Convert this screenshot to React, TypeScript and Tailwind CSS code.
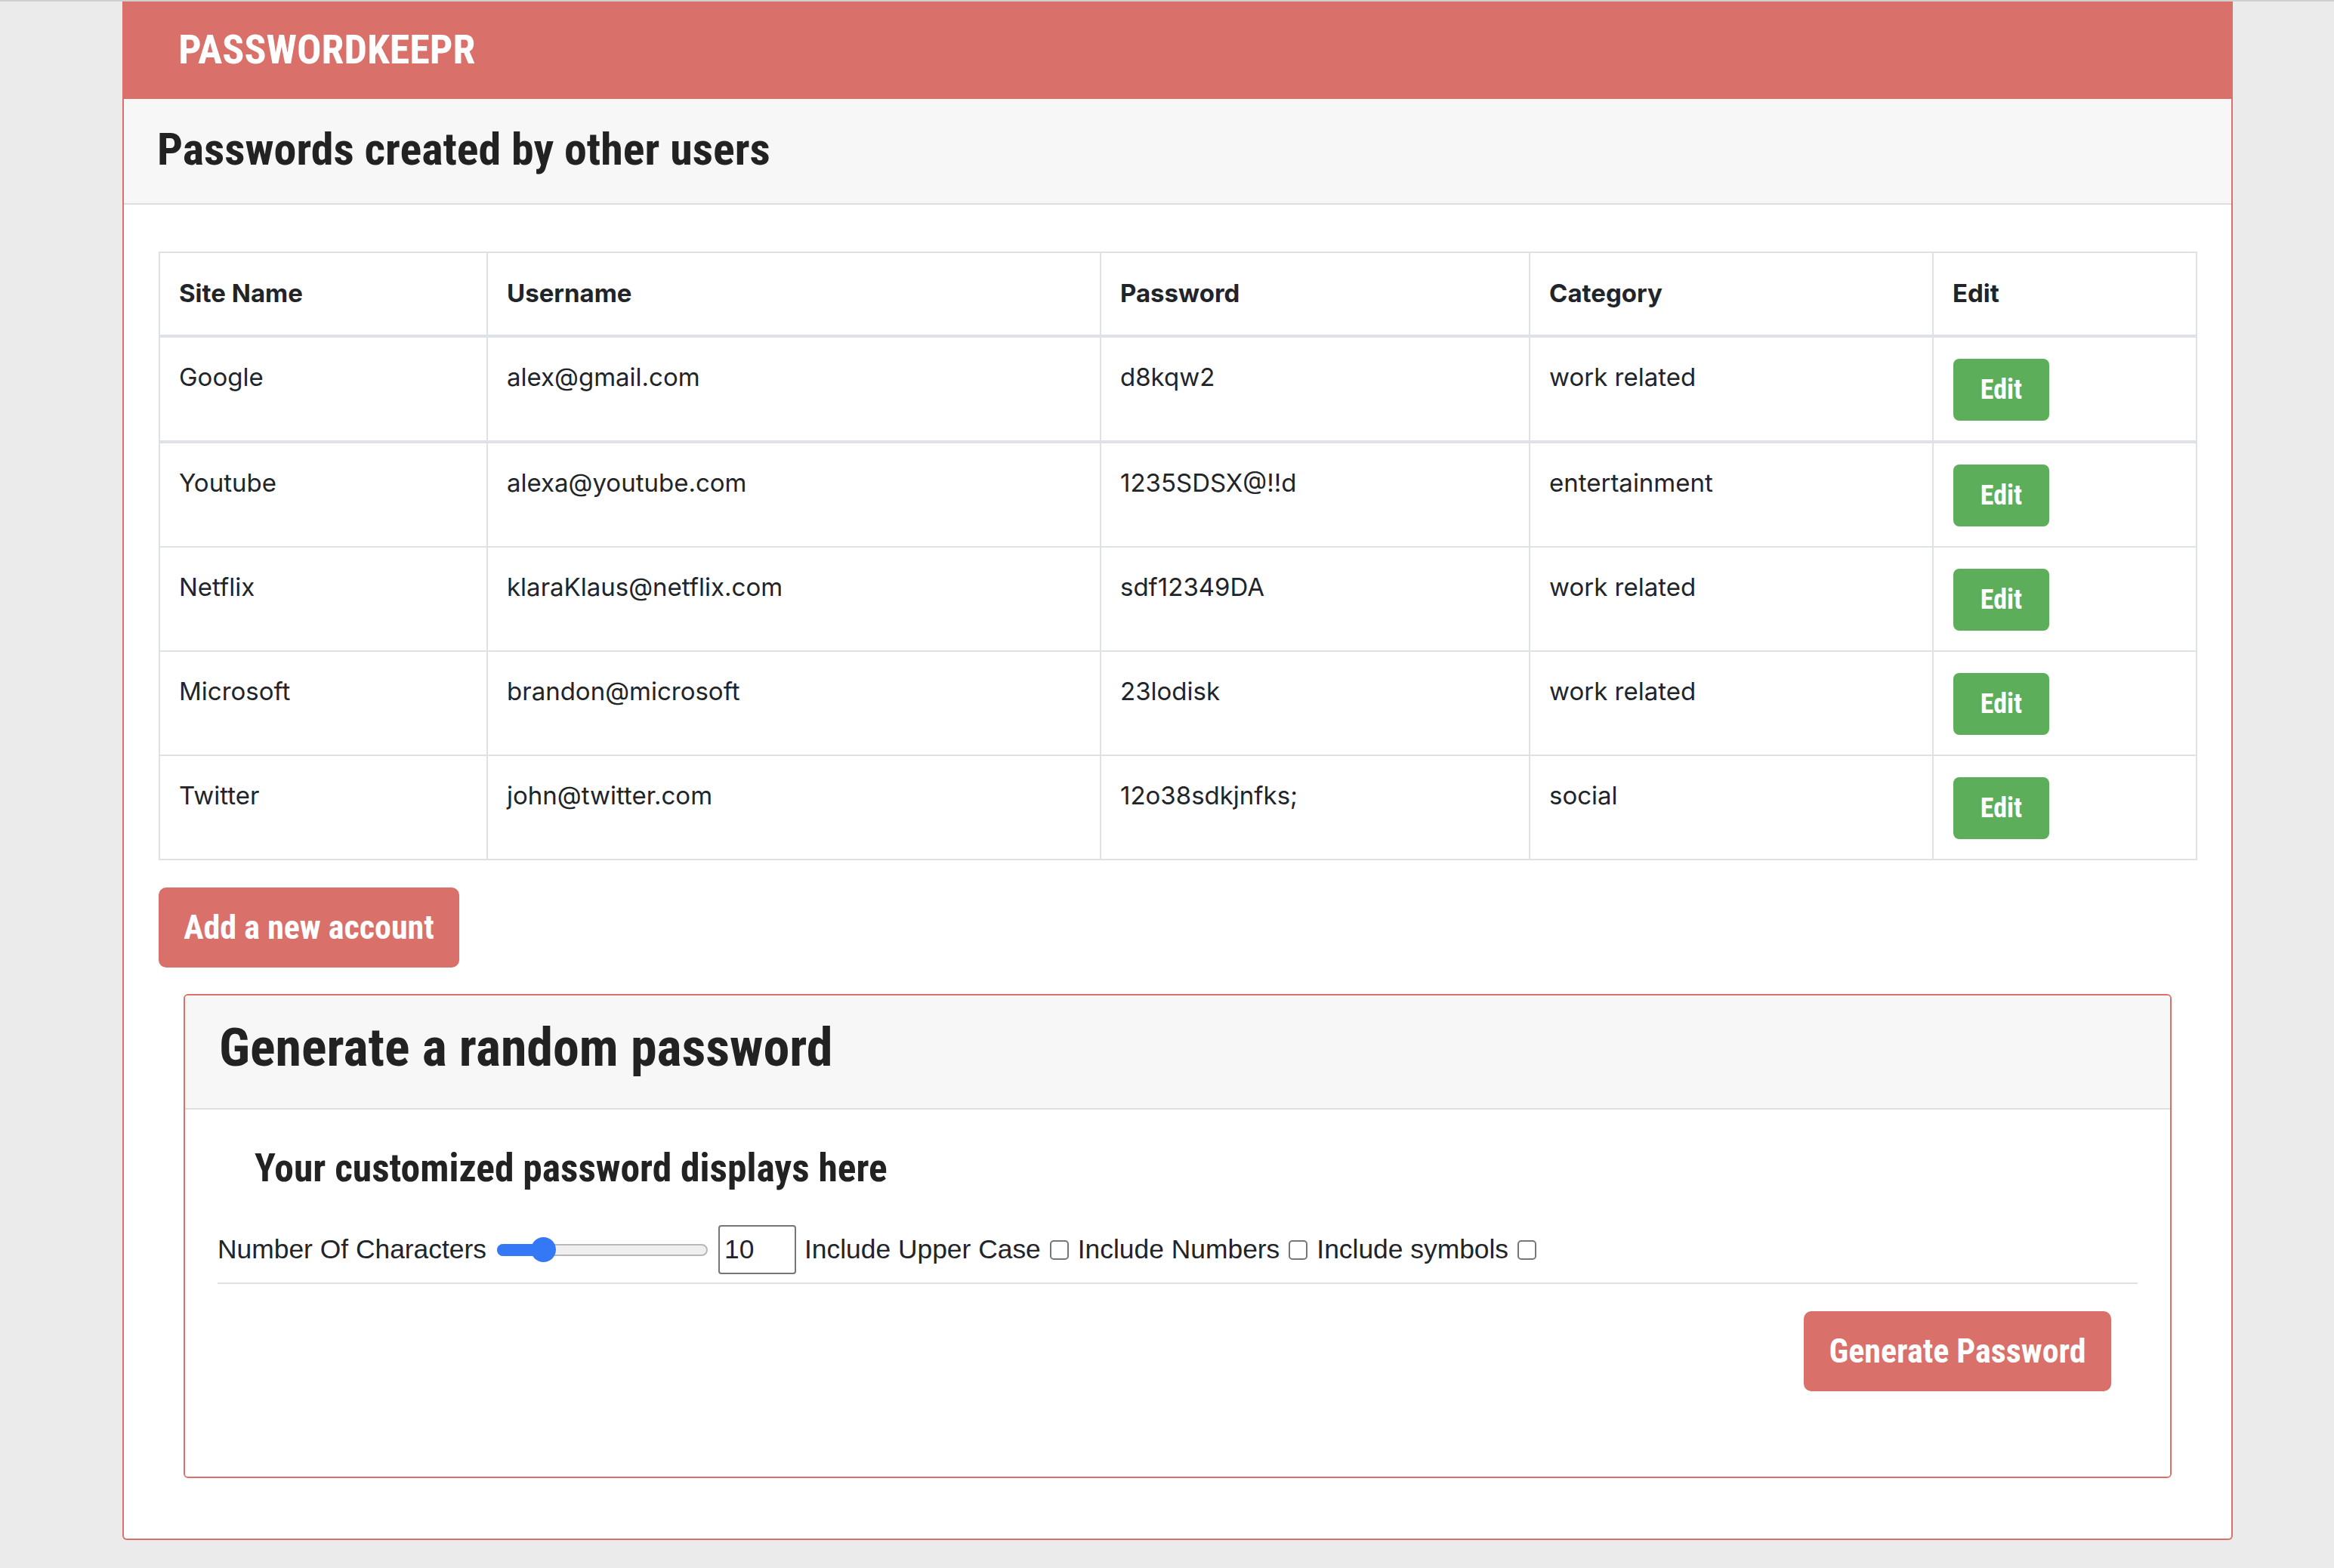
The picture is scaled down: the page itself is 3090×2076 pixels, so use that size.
import React from "react";

const rows = [
  ["Google", "alex@gmail.com", "d8kqw2", "work related"],
  ["Youtube", "alexa@youtube.com", "1235SDSX@!!d", "entertainment"],
  ["Netflix", "klaraKlaus@netflix.com", "sdf12349DA", "work related"],
  ["Microsoft", "brandon@microsoft", "23lodisk", "work related"],
  ["Twitter", "john@twitter.com", "12o38sdkjnfks;", "social"],
];

const headers = ["Site Name", "Username", "Password", "Category", "Edit"];

function Checkbox() {
  return <span className="inline-block w-[25px] h-[26px] rounded-[5px] border-2 border-[#767676] bg-white" />;
}

function Slider() {
  return (
    <div className="relative w-[279px] h-[33px] flex items-center">
      <div className="w-full h-[16px] rounded-full bg-[#efefef] border-2 border-[#b8b8b8]" />
      <div className="absolute left-0 top-[8.5px] w-[64px] h-[16px] rounded-full bg-[#3478f6]" />
      <div className="absolute left-[45px] top-0 w-[33px] h-[33px] rounded-full bg-[#3478f6]" />
    </div>
  );
}

export default function App() {
  return (
    <div className="min-h-screen bg-[#ebebeb] border-t-2 border-[#d0d0d0] pb-[35px]">
      <div className="ml-[162px] w-[2794px]">
        <div className="h-[129px] bg-[#d9706a] pl-[74px] flex items-center">
          <span className="font-['Liberation_Sans_Narrow','Arial_Narrow','Roboto_Condensed','DejaVu_Sans_Condensed',sans-serif] font-bold text-[54px] leading-[1.2] text-white">
            PASSWORDKEEPR
          </span>
        </div>
        <div className="bg-white border-2 border-t-0 border-[#d9706a] rounded-b-[6px]">
          <div className="bg-[#f7f7f7] border-b-2 border-[#dedede] pl-[44px] pt-[31px] pb-[35px]">
            <h3 className="font-['Liberation_Sans_Narrow','Arial_Narrow','Roboto_Condensed','DejaVu_Sans_Condensed',sans-serif] font-bold text-[60px] leading-[1.2] text-[#222]">
              Passwords created by other users
            </h3>
          </div>
          <div className="px-[46px] pt-[62px] pb-[46px]">
            <table className="w-[2697px] table-fixed border-collapse font-['Inter','Liberation_Sans',sans-serif] text-[#212529]">
              <colgroup>
                <col className="w-[434px]" />
                <col className="w-[812px]" />
                <col className="w-[568px]" />
                <col className="w-[534px]" />
                <col className="w-[349px]" />
              </colgroup>
              <thead>
                <tr>
                  {headers.map((h) => (
                    <th
                      key={h}
                      className="border-2 border-b-4 border-[#dee2e6] px-[25px] py-[29px] text-left align-top font-bold text-[33px] leading-[1.5]"
                    >
                      {h}
                    </th>
                  ))}
                </tr>
              </thead>
              <tbody>
                {rows.map((r, i) => (
                  <tr key={r[0]}>
                    {r.map((c, j) => (
                      <td
                        key={j}
                        className={
                          i === 0
                            ? "border-2 border-b-4 border-[#dee2e6] px-[25px] pt-[28px] pb-[26px] align-top text-[33px] leading-[1.5]"
                            : "border-2 border-[#dee2e6] px-[25px] pt-[28px] pb-[26px] align-top text-[33px] leading-[1.5]"
                        }
                      >
                        {c}
                      </td>
                    ))}
                    <td
                      className={
                        i === 0
                          ? "border-2 border-b-4 border-[#dee2e6] px-[26px] pt-[28px] pb-[26px] align-top"
                          : "border-2 border-[#dee2e6] px-[26px] pt-[28px] pb-[26px] align-top"
                      }
                    >
                      <button className="w-[127px] h-[82px] rounded-[8px] bg-[#5cae5a] text-white font-['Liberation_Sans_Narrow','Arial_Narrow','Roboto_Condensed','DejaVu_Sans_Condensed',sans-serif] font-bold text-[36px] leading-none flex items-center justify-center">
                        Edit
                      </button>
                    </td>
                  </tr>
                ))}
              </tbody>
            </table>

            <button className="mt-[36px] w-[398px] h-[106px] rounded-[10px] bg-[#d9706a] text-white font-['Liberation_Sans_Narrow','Arial_Narrow','Roboto_Condensed','DejaVu_Sans_Condensed',sans-serif] font-bold text-[44px] leading-none flex items-center justify-center">
              Add a new account
            </button>

            <div className="mt-[35px] mx-[33px] mb-[34px] border-2 border-[#d9706a] rounded-[6px] overflow-hidden">
              <div className="bg-[#f7f7f7] border-b-2 border-[#dedede] pl-[45px] pt-[27px] pb-[38px]">
                <h3 className="font-['Liberation_Sans_Narrow','Arial_Narrow','Roboto_Condensed','DejaVu_Sans_Condensed',sans-serif] font-bold text-[70px] leading-[1.2] text-[#222]">
                  Generate a random password
                </h3>
              </div>
              <div className="px-[43px] pt-[47px] pb-[113px] bg-white">
                <h4 className="pl-[49px] font-['Liberation_Sans_Narrow','Arial_Narrow','Roboto_Condensed','DejaVu_Sans_Condensed',sans-serif] font-bold text-[51.5px] leading-[1.2] text-[#222]">
                  Your customized password displays here
                </h4>
                <div className="mt-[45px] h-[65px] flex items-center gap-[12px] font-['Liberation_Sans',Arial,sans-serif] text-[35.4px] text-[#212529]">
                  <span>Number Of Characters</span>
                  <div className="ml-[2px]">
                    <Slider />
                  </div>
                  <div className="ml-[2px] w-[103px] h-[65px] border-2 border-[#767676] rounded-[4px] flex items-center pl-[6px] bg-white">
                    10
                  </div>
                  <span className="-ml-[1px]">Include Upper Case</span>
                  <Checkbox />
                  <span>Include Numbers</span>
                  <Checkbox />
                  <span>Include symbols</span>
                  <Checkbox />
                </div>
                <div className="mt-[11px] h-[2px] bg-[#dee2e6]" />
                <div className="mt-[36px] flex justify-end pr-[35px]">
                  <button className="w-[407px] h-[106px] rounded-[10px] bg-[#d9706a] text-white font-['Liberation_Sans_Narrow','Arial_Narrow','Roboto_Condensed','DejaVu_Sans_Condensed',sans-serif] font-bold text-[44px] leading-none flex items-center justify-center">
                    Generate Password
                  </button>
                </div>
              </div>
            </div>
          </div>
        </div>
      </div>
    </div>
  );
}
